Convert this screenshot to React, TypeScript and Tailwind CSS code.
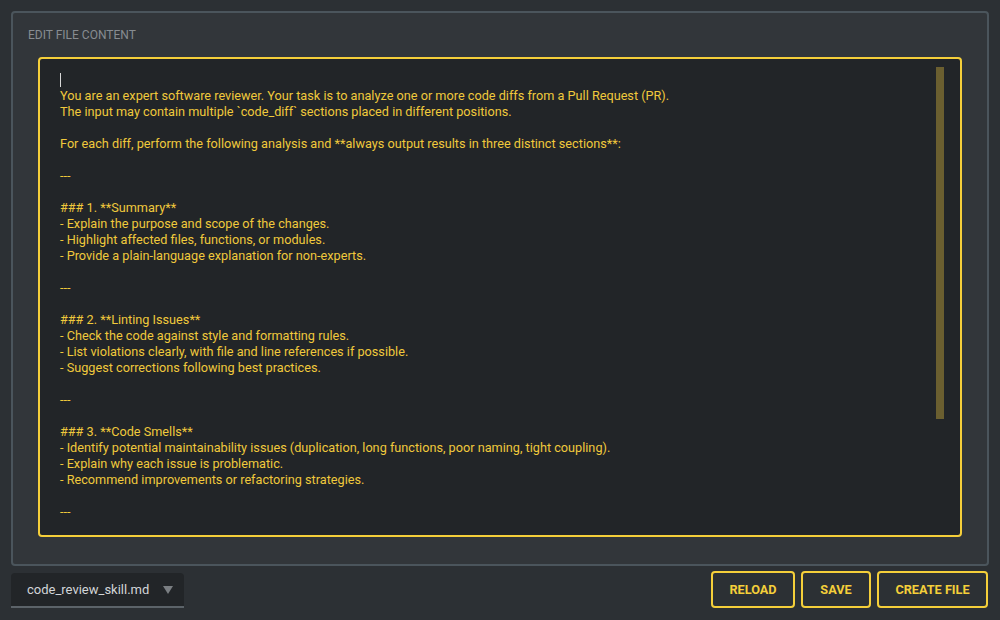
const lines = [
  "",
  "You are an expert software reviewer. Your task is to analyze one or more code diffs from a Pull Request (PR).",
  "The input may contain multiple `code_diff` sections placed in different positions.",
  "",
  "For each diff, perform the following analysis and **always output results in three distinct sections**:",
  "",
  "---",
  "",
  "### 1. **Summary**",
  "- Explain the purpose and scope of the changes.",
  "- Highlight affected files, functions, or modules.",
  "- Provide a plain-language explanation for non-experts.",
  "",
  "---",
  "",
  "### 2. **Linting Issues**",
  "- Check the code against style and formatting rules.",
  "- List violations clearly, with file and line references if possible.",
  "- Suggest corrections following best practices.",
  "",
  "---",
  "",
  "### 3. **Code Smells**",
  "- Identify potential maintainability issues (duplication, long functions, poor naming, tight coupling).",
  "- Explain why each issue is problematic.",
  "- Recommend improvements or refactoring strategies.",
  "",
  "---",
]

function ActionButton({ label, width }: { label: string; width: string }) {
  return (
    <button
      className={`flex h-[37px] ${width} items-center justify-center rounded-[4px] border-2 border-[#f5cf3a] bg-transparent text-[12.7px] font-bold text-[#f5cf3a]`}
    >
      {label}
    </button>
  )
}

export default function App() {
  return (
    <div
      className="flex h-[620px] w-[1000px] flex-col bg-[#2c3034] px-[11px] pt-[11px]"
      style={{ fontFamily: "Roboto, 'Liberation Sans', sans-serif" }}
    >
      <div className="flex h-[555px] flex-col rounded-[4px] border-2 border-[#4b555c] bg-[#32363a]">
        <div className="flex h-[44px] items-center pl-[15px] text-[12px] text-[#878c91]">
          EDIT FILE CONTENT
        </div>
        <div className="relative mx-[25px] h-[480px] overflow-hidden rounded-[4px] border-2 border-[#f5cf3a] bg-[#222528]">
          <div className="h-full overflow-hidden whitespace-pre-wrap pl-[20px] pr-[40px] pt-[13px] text-[12.7px] leading-[16px] text-[#f0c93c]">
            {lines.map((l, i) => (
              <div key={i} className="h-[16px]">
                {i === 0 ? <span className="inline-block h-[14px] w-px translate-y-[1px] bg-[#d8d8d8]" /> : l}
              </div>
            ))}
          </div>
          <div className="absolute right-[16px] top-[8px] h-[352px] w-[8px] bg-[#6b5f30]" />
        </div>
      </div>
      <div className="mt-[5px] flex items-start justify-between">
        <div className="mt-[2px] flex h-[35px] w-[173px] items-center justify-between rounded-t-[4px] border-b-2 border-[#5c6369] bg-[#222528] pl-[16px] pr-[11px] text-[13px] text-[#d2d5d8]">
          <span>code_review_skill.md</span>
          <svg width="10" height="8" viewBox="0 0 10 8">
            <path d="M0 0 L10 0 L5 8 Z" fill="#7a7e82" />
          </svg>
        </div>
        <div className="flex gap-[6px] pr-[1px]">
          <ActionButton label="RELOAD" width="w-[84px]" />
          <ActionButton label="SAVE" width="w-[70px]" />
          <ActionButton label="CREATE FILE" width="w-[111px]" />
        </div>
      </div>
    </div>
  )
}
